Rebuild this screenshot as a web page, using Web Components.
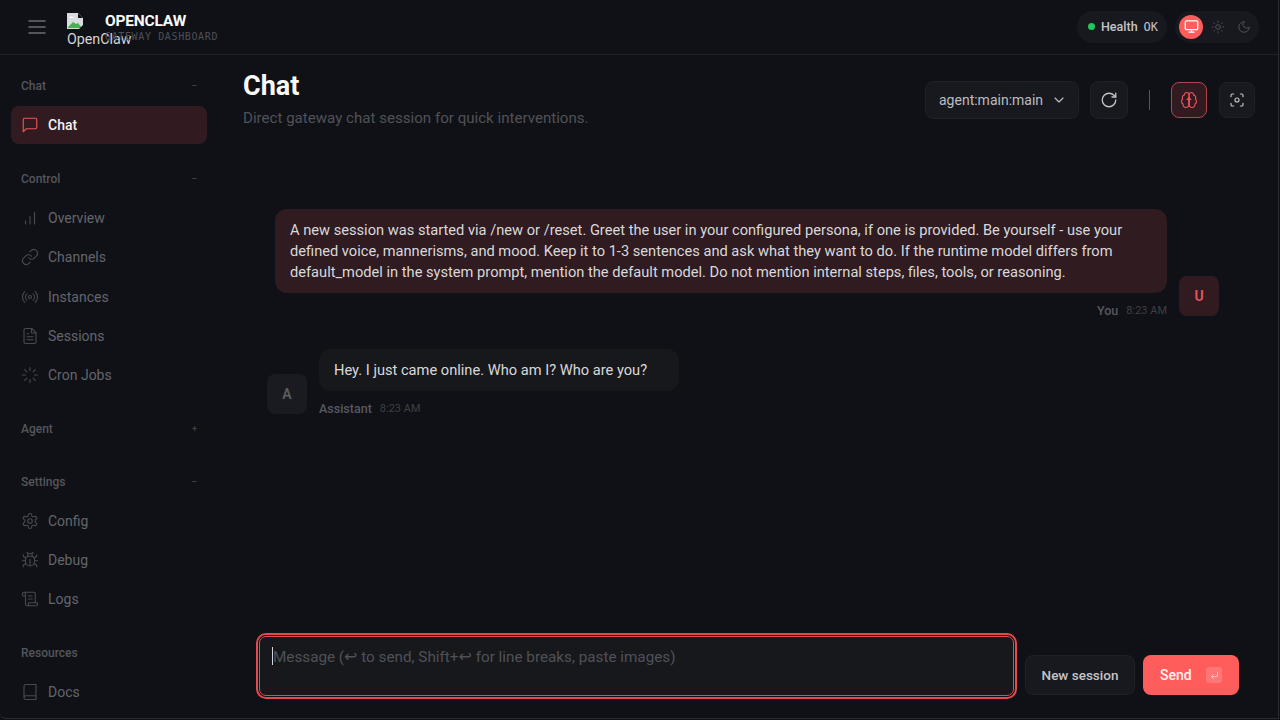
<!DOCTYPE html>
<html lang="en">
<head>
<meta charset="utf-8">
<title>OpenClaw Gateway Dashboard</title>
<style>
  html, body { margin: 0; height: 100%; background: #101116; overflow: hidden; }
  body { font-family: Roboto, "Noto Sans", sans-serif; color: #e4e4e7; }
</style>
</head>
<body>
<oc-app>
  <oc-topbar slot="top"></oc-topbar>
  <oc-sidebar slot="side">
    <oc-nav-group label="Chat" mark="–">
      <oc-nav-item icon="message" active>Chat</oc-nav-item>
    </oc-nav-group>
    <oc-nav-group label="Control" mark="–">
      <oc-nav-item icon="chart">Overview</oc-nav-item>
      <oc-nav-item icon="link">Channels</oc-nav-item>
      <oc-nav-item icon="radio">Instances</oc-nav-item>
      <oc-nav-item icon="file">Sessions</oc-nav-item>
      <oc-nav-item icon="loader">Cron Jobs</oc-nav-item>
    </oc-nav-group>
    <oc-nav-group label="Agent" mark="+" collapsed></oc-nav-group>
    <oc-nav-group label="Settings" mark="–" style="--gap: 1px">
      <oc-nav-item icon="settings">Config</oc-nav-item>
      <oc-nav-item icon="bug">Debug</oc-nav-item>
      <oc-nav-item icon="scroll">Logs</oc-nav-item>
    </oc-nav-group>
    <oc-nav-group label="Resources">
      <oc-nav-item icon="book">Docs</oc-nav-item>
    </oc-nav-group>
  </oc-sidebar>
  <oc-chat-page slot="main">
    <oc-message role="user" who="You" time="8:23 AM" initial="U">A new session was started via /new or /reset. Greet the user in your configured persona, if one is provided. Be yourself - use your defined voice, mannerisms, and mood. Keep it to 1-3 sentences and ask what they want to do. If the runtime model differs from default_model in the system prompt, mention the default model. Do not mention internal steps, files, tools, or reasoning.</oc-message>
    <oc-message role="assistant" who="Assistant" time="8:23 AM" initial="A">Hey. I just came online. Who am I? Who are you?</oc-message>
  </oc-chat-page>
</oc-app>

<script>
const ICONS = {
  menu: '<path d="M4 6h16M4 12h16M4 18h16"/>',
  message: '<path d="M21 15a2 2 0 0 1-2 2H7l-4 4V5a2 2 0 0 1 2-2h14a2 2 0 0 1 2 2z"/>',
  chart: '<path d="M6 20v-4M12 20V10M18 20V4"/>',
  link: '<path d="M10 13a5 5 0 0 0 7.54.54l3-3a5 5 0 0 0-7.07-7.07l-1.72 1.71"/><path d="M14 11a5 5 0 0 0-7.54-.54l-3 3a5 5 0 0 0 7.07 7.07l1.71-1.71"/>',
  radio: '<path d="M4.9 19.1C1 15.2 1 8.8 4.9 4.9"/><path d="M7.8 16.2c-2.3-2.3-2.3-6.1 0-8.5"/><circle cx="12" cy="12" r="2"/><path d="M16.2 7.8c2.3 2.3 2.3 6.1 0 8.5"/><path d="M19.1 4.9C23 8.8 23 15.1 19.1 19"/>',
  file: '<path d="M14.5 2H6a2 2 0 0 0-2 2v16a2 2 0 0 0 2 2h12a2 2 0 0 0 2-2V7.5L14.5 2z"/><path d="M14 2v6h6M16 13H8M16 17H8M10 9H8"/>',
  loader: '<path d="M12 2v4M16.2 7.8l2.9-2.9M18 12h4M16.2 16.2l2.9 2.9M12 18v4M4.9 19.1l2.9-2.9M2 12h4M4.9 4.9l2.9 2.9"/>',
  settings: '<path d="M12.22 2h-.44a2 2 0 0 0-2 2v.18a2 2 0 0 1-1 1.73l-.43.25a2 2 0 0 1-2 0l-.15-.08a2 2 0 0 0-2.73.73l-.22.38a2 2 0 0 0 .73 2.73l.15.1a2 2 0 0 1 1 1.72v.51a2 2 0 0 1-1 1.74l-.15.09a2 2 0 0 0-.73 2.73l.22.38a2 2 0 0 0 2.73.73l.15-.08a2 2 0 0 1 2 0l.43.25a2 2 0 0 1 1 1.73V20a2 2 0 0 0 2 2h.44a2 2 0 0 0 2-2v-.18a2 2 0 0 1 1-1.73l.43-.25a2 2 0 0 1 2 0l.15.08a2 2 0 0 0 2.73-.73l.22-.39a2 2 0 0 0-.73-2.73l-.15-.08a2 2 0 0 1-1-1.74v-.5a2 2 0 0 1 1-1.74l.15-.09a2 2 0 0 0 .73-2.73l-.22-.38a2 2 0 0 0-2.73-.73l-.15.08a2 2 0 0 1-2 0l-.43-.25a2 2 0 0 1-1-1.73V4a2 2 0 0 0-2-2z"/><circle cx="12" cy="12" r="3"/>',
  bug: '<path d="M8 2l1.88 1.88M14.12 3.88 16 2M9 7.13v-1a3.003 3.003 0 1 1 6 0v1"/><path d="M12 20c-3.3 0-6-2.7-6-6v-3a4 4 0 0 1 4-4h4a4 4 0 0 1 4 4v3c0 3.3-2.7 6-6 6M12 20v-9"/><path d="M6.53 9C4.6 8.8 3 7.1 3 5M6 13H2M3 21c0-2.1 1.7-3.9 3.8-4M20.97 5c0 2.1-1.6 3.8-3.5 4M22 13h-4M17.2 17c2.1.1 3.8 1.9 3.8 4"/>',
  scroll: '<path d="M15 12h-5M15 8h-5M19 17V5a2 2 0 0 0-2-2H4"/><path d="M8 21h12a2 2 0 0 0 2-2v-1a1 1 0 0 0-1-1H11a1 1 0 0 0-1 1v1a2 2 0 1 1-4 0V5a2 2 0 1 0-4 0v2a1 1 0 0 0 1 1h3"/>',
  book: '<path d="M4 19.5v-15A2.5 2.5 0 0 1 6.5 2H20v20H6.5a2.5 2.5 0 0 1 0-5H20"/>',
  monitor: '<rect x="2" y="3" width="20" height="14" rx="2"/><path d="M8 21h8M12 17v4"/>',
  sun: '<circle cx="12" cy="12" r="4"/><path d="M12 2v2M12 20v2M4.93 4.93l1.41 1.41M17.66 17.66l1.41 1.41M2 12h2M20 12h2M6.34 17.66l-1.41 1.41M19.07 4.93l-1.41 1.41"/>',
  moon: '<path d="M12 3a6 6 0 0 0 9 9 9 9 0 1 1-9-9Z"/>',
  refresh: '<path d="M21 12a9 9 0 1 1-9-9c2.52 0 4.93 1 6.74 2.74L21 8"/><path d="M21 3v5h-5"/>',
  brain: '<path d="M12 5a3 3 0 1 0-5.997.125 4 4 0 0 0-2.526 5.77 4 4 0 0 0 .556 6.588A4 4 0 1 0 12 18Z"/><path d="M12 5a3 3 0 1 1 5.997.125 4 4 0 0 1 2.526 5.77 4 4 0 0 1-.556 6.588A4 4 0 1 1 12 18Z"/><path d="M12 18V9M9.5 11.5 12 9l2.5 2.5"/>',
  scan: '<path d="M3 7V5a2 2 0 0 1 2-2h2M17 3h2a2 2 0 0 1 2 2v2M21 17v2a2 2 0 0 1-2 2h-2M7 21H5a2 2 0 0 1-2-2v-2"/><circle cx="12" cy="12" r="3"/>',
  chevron: '<path d="m6 9 6 6 6-6"/>',
  enter: '<path d="M9 10l-5 5 5 5"/><path d="M20 4v7a4 4 0 0 1-4 4H4"/>'
};

class OcIcon extends HTMLElement {
  connectedCallback() {
    const size = this.getAttribute('size') || 18;
    const stroke = this.getAttribute('stroke') || 2;
    this.attachShadow({ mode: 'open' }).innerHTML = `
      <style>:host { display: inline-flex; flex: none; } svg { display: block; }</style>
      <svg width="${size}" height="${size}" viewBox="0 0 24 24" fill="none" stroke="currentColor"
        stroke-width="${stroke}" stroke-linecap="round" stroke-linejoin="round">${ICONS[this.getAttribute('name')] || ''}</svg>`;
  }
}

class OcApp extends HTMLElement {
  connectedCallback() {
    this.attachShadow({ mode: 'open' }).innerHTML = `
      <style>
        :host { display: block; width: 1280px; height: 720px; overflow: hidden; }
        .frame {
          width: 1279px; height: 719px; box-sizing: border-box;
          display: grid; grid-template-rows: 55px 1fr; grid-template-columns: 218px 1fr;
          background: #101116; border-right: 1px solid #2b2c31; border-bottom: 1px solid #2b2c31;
          border-bottom-left-radius: 6px; overflow: hidden;
        }
        .top { grid-column: 1 / 3; }
        .side, .main { min-height: 0; }
      </style>
      <div class="frame">
        <div class="top"><slot name="top"></slot></div>
        <div class="side"><slot name="side"></slot></div>
        <div class="main"><slot name="main"></slot></div>
      </div>`;
  }
}

class OcTopbar extends HTMLElement {
  connectedCallback() {
    this.attachShadow({ mode: 'open' }).innerHTML = `
      <style>
        :host { display: flex; box-sizing: border-box; height: 55px; align-items: center; justify-content: space-between;
          padding: 0 21px 1px 25px; border-bottom: 1px solid #212227; }
        .left { display: flex; align-items: center; }
        .burger { color: #6b6d74; display: flex; margin-right: 18px; }
        .logo { width: 38px; height: 44px; flex: none; font-size: 14.25px; line-height: 16px; color: #d4d4d8; white-space: nowrap; padding-top: 8px; box-sizing: border-box; }
        .logo svg { display: block; margin-bottom: 2px; }
        .brand { display: flex; flex-direction: column; padding-top: 2px; }
        .name { font-size: 15.5px; line-height: 18px; font-weight: 700; color: #fafafa; letter-spacing: -0.2px; }
        .sub { font-family: "DejaVu Sans Mono", monospace; font-size: 10px; line-height: 14px; letter-spacing: 0.63px; color: #4d4f56; }
        .right { display: flex; align-items: center; gap: 8px; }
        .pill { display: flex; align-items: center; height: 32px; border-radius: 16px; background: #18191e; box-sizing: border-box; }
        .health { padding: 0 11px; gap: 6px; font-size: 12.5px; color: #c4c4c8; width: 90px; font-weight: 500; }
        .dot { width: 7px; height: 7px; border-radius: 50%; background: #22c55e; flex: none; }
        .ok { font-family: "DejaVu Sans Mono", monospace; font-size: 12px; }
        .themes { gap: 3px; padding: 0 4px; width: 84px; }
        .theme { width: 23px; height: 24px; display: flex; align-items: center; justify-content: center; color: #55575e; border-radius: 50%; }
        .theme.on { width: 24px; color: #fff; background: #ff5c5c; }
      </style>
      <div class="left">
        <span class="burger"><oc-icon name="menu" size="24" stroke="1.5"></oc-icon></span>
        <div class="logo">
          <svg width="16" height="16" viewBox="0 0 16 16"><path d="M0 0h11l5 5v11H0z" fill="#d8dbe0"/><path d="M11 0l5 5h-5z" fill="#101116"/><path d="M1 14l5-5 3 2 2-1 4 5H1z" fill="#4caf50"/><path d="M2 5c1-2 4-2 5 0z" fill="#fff"/><path d="M12 16l4-4v4z" fill="#101116"/></svg>
          OpenClaw
        </div>
        <div class="brand"><span class="name">OPENCLAW</span><span class="sub">GATEWAY DASHBOARD</span></div>
      </div>
      <div class="right">
        <div class="pill health"><span class="dot"></span><span>Health</span><span class="ok">OK</span></div>
        <div class="pill themes">
          <span class="theme on"><oc-icon name="monitor" size="15"></oc-icon></span>
          <span class="theme"><oc-icon name="sun" size="14" stroke="1.5"></oc-icon></span>
          <span class="theme"><oc-icon name="moon" size="14" stroke="1.5"></oc-icon></span>
        </div>
      </div>`;
  }
}

class OcSidebar extends HTMLElement {
  connectedCallback() {
    this.attachShadow({ mode: 'open' }).innerHTML = `
      <style>
        :host { display: flex; flex-direction: column; height: 100%; box-sizing: border-box; padding: 20px 11px 0; overflow: hidden; }
      </style>
      <slot></slot>`;
  }
}

class OcNavGroup extends HTMLElement {
  connectedCallback() {
    const mark = this.getAttribute('mark');
    this.attachShadow({ mode: 'open' }).innerHTML = `
      <style>
        :host { display: block; margin-bottom: 24px; }
        :host([collapsed]) { margin-bottom: 33px; }
        .label { display: flex; justify-content: space-between; align-items: center; box-sizing: border-box; height: 20px; padding: 2px 10px 0; font-size: 12px; font-weight: 500; color: #54565d; }
        .mark { font-size: 9px; color: #3f4147; }
        .items { display: flex; flex-direction: column; gap: var(--gap, 1.25px); margin-top: 11px; }
        :host([collapsed]) .items { display: none; }
      </style>
      <div class="label"><span>${this.getAttribute('label')}</span>${mark ? `<span class="mark">${mark}</span>` : ''}</div>
      <div class="items"><slot></slot></div>`;
  }
}

class OcNavItem extends HTMLElement {
  connectedCallback() {
    this.attachShadow({ mode: 'open' }).innerHTML = `
      <style>
        :host { display: flex; align-items: center; gap: 9px; box-sizing: border-box; width: 196px; height: 38px; padding: 0 10px; border-radius: 8px; font-size: 14px; font-weight: 400; color: #63656c; }
        .icon { color: #47494f; display: flex; }
        :host([active]) { background: #321b20; color: #f1f1f3; font-weight: 500; }
        :host([active]) .icon { color: #f0534f; }
      </style>
      <span class="icon"><oc-icon name="${this.getAttribute('icon')}" size="18" stroke="1.5"></oc-icon></span>
      <slot></slot>`;
  }
}

class OcChatPage extends HTMLElement {
  connectedCallback() {
    this.attachShadow({ mode: 'open' }).innerHTML = `
      <style>
        :host { display: flex; flex-direction: column; height: 664px; box-sizing: border-box; padding: 0 25px 0 25px; }
        header { display: flex; justify-content: space-between; align-items: flex-start; padding-top: 15px; }
        h1 { margin: 0; font-size: 27px; line-height: 32px; font-weight: 700; color: #fafafa; }
        p { margin: 6px 0 0; font-size: 15.1px; line-height: 20px; color: #4f5158; }
        .tools { display: flex; align-items: center; margin-top: 11px; }
        .select { display: flex; align-items: center; justify-content: space-between; width: 154px; height: 38px; box-sizing: border-box; padding: 0 11px 0 13px; border: 1px solid #1f2025; border-radius: 8px; background: #18191e; color: #bcbcc1; font-size: 14px; }
        .btn { width: 36px; height: 36px; box-sizing: border-box; display: flex; align-items: center; justify-content: center; border-radius: 8px; border: 1px solid #1f2025; background: #18191e; color: #c4c4c8; }
        .refresh { width: 38px; height: 38px; margin-left: 11px; }
        .divider { width: 1px; height: 20px; background: #55565c; margin: 0 21px; }
        .brain { border-color: #b5434a; background: #321b20; color: #e8565a; margin-right: 12px; }
        .log { flex: 1; display: flex; flex-direction: column; gap: 32px; padding: 81px 36px 0 24px; }
        .compose { display: flex; align-items: flex-end; padding: 0 16px 0 16px; height: 62px; margin-bottom: 24px; }
        .box { width: 755px; height: 60px; flex: none; box-sizing: border-box; margin: 0 11px -1px 0; padding: 10px 12px; border: 1.5px solid #e5484d; border-radius: 7px; outline: 2.5px solid #e5484d; outline-offset: 1px; background: #17181c; font-size: 15.25px; line-height: 20px; color: #4f5158; white-space: nowrap; }
        .caret { display: inline-block; width: 1px; height: 18px; background: #d4d4d8; vertical-align: -3px; }
        .arrow { font-family: "DejaVu Sans", sans-serif; font-size: 16px; }
        .action { height: 40px; flex: none; display: flex; align-items: center; box-sizing: border-box; border-radius: 8px; font-size: 14px; font-weight: 500; white-space: nowrap; }
        .new { width: 110px; justify-content: center; border: 1px solid #1f2025; background: #18191e; color: #c4c4c8; margin-right: 8px; font-size: 13.5px; }
        .send { width: 96px; padding: 0 17px; justify-content: space-between; background: #ff5c5c; color: #fff3f1; }
        .key { width: 16px; height: 16px; border-radius: 3px; background: rgba(255,255,255,.16); display: flex; align-items: center; justify-content: center; color: #ffd9d6; }
      </style>
      <header>
        <div><h1>Chat</h1><p>Direct gateway chat session for quick interventions.</p></div>
        <div class="tools">
          <div class="select"><span>agent:main:main</span><oc-icon name="chevron" size="16" stroke="1.75"></oc-icon></div>
          <div class="btn refresh"><oc-icon name="refresh" size="18" stroke="1.75"></oc-icon></div>
          <div class="divider"></div>
          <div class="btn brain"><oc-icon name="brain" size="18" stroke="1.5"></oc-icon></div>
          <div class="btn"><oc-icon name="scan" size="16" stroke="1.75"></oc-icon></div>
        </div>
      </header>
      <div class="log"><slot></slot></div>
      <div class="compose">
        <div class="box"><span class="caret"></span>Message (<span class="arrow">↩</span> to send, Shift+<span class="arrow">↩</span> for line breaks, paste images)</div>
        <div class="action new">New session</div>
        <div class="action send"><span>Send</span><span class="key"><oc-icon name="enter" size="9"></oc-icon></span></div>
      </div>`;
  }
}

class OcMessage extends HTMLElement {
  connectedCallback() {
    this.attachShadow({ mode: 'open' }).innerHTML = `
      <style>
        :host { display: flex; align-items: flex-end; gap: 12px; }
        :host([role="user"]) { flex-direction: row-reverse; }
        .avatar { width: 40px; height: 40px; flex: none; border-radius: 8px; margin-bottom: 1px; display: flex; align-items: center; justify-content: center; background: #1a1b20; color: #5c5e65; font-size: 14px; font-weight: 600; }
        :host([role="user"]) .avatar { background: #321b20; color: #e8565a; }
        .body { display: flex; flex-direction: column; align-items: flex-start; }
        :host([role="user"]) .body { align-items: flex-end; }
        .bubble { box-sizing: border-box; padding: 11px 15px; border-radius: 12px; background: #17181c; color: #d9d9dc; font-size: 14.65px; line-height: 21px; width: 360px; height: 42px; }
        :host([role="user"]) .bubble { background: #2f1b20; width: 892px; height: 84px; padding: 11px 15px; }
        .meta { display: flex; gap: 8px; height: 14px; align-items: center; margin-top: 10px; font-size: 12.5px; color: #56585f; font-weight: 500; }
        .time { color: #3d3f45; font-weight: 400; font-size: 11px; }
      </style>
      <div class="avatar">${this.getAttribute('initial')}</div>
      <div class="body">
        <div class="bubble"><slot></slot></div>
        <div class="meta"><span>${this.getAttribute('who')}</span><span class="time">${this.getAttribute('time')}</span></div>
      </div>`;
  }
}

customElements.define('oc-icon', OcIcon);
customElements.define('oc-app', OcApp);
customElements.define('oc-topbar', OcTopbar);
customElements.define('oc-sidebar', OcSidebar);
customElements.define('oc-nav-group', OcNavGroup);
customElements.define('oc-nav-item', OcNavItem);
customElements.define('oc-chat-page', OcChatPage);
customElements.define('oc-message', OcMessage);
</script>
</body>
</html>
